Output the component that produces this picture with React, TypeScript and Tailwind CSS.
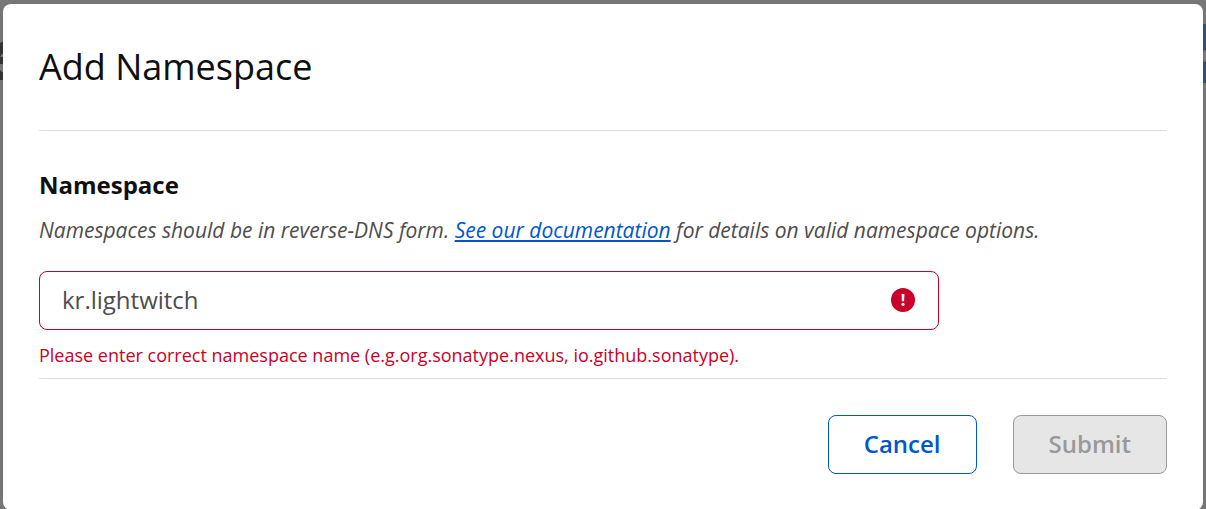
import { useState } from 'react';

// Slice of the page that stays visible on both sides of the dialog
function PageBehind() {
  return (
    <div className="absolute inset-x-0 top-6 flex items-start justify-between" aria-hidden="true">
      <svg className="mt-4 h-10 w-1" viewBox="0 0 4 40" fill="#333333">
        <path d="M0 3 L4 1 V14 Q2 12 0 17 Z" />
        <path d="M0 17 H4 V24 H0 Z" />
        <path d="M0 30 Q2 33 4 32 V40 L0 40 Z" />
      </svg>
      <div className="flex h-[59px] w-[3px] items-center justify-end overflow-hidden bg-[#344f78]">
        <div className="mt-1 h-3 w-[3px] shrink-0 rounded-l-full bg-[#75787a]" />
      </div>
    </div>
  );
}

function ErrorIcon() {
  return (
    <svg className="pointer-events-none absolute top-[17px] right-6 size-6" viewBox="0 0 24 24" aria-hidden="true">
      <circle cx="12" cy="12" r="12" fill="#ca0028" />
      <path d="M10.6 6.4 Q10.6 6 11 6 H13 Q13.4 6 13.4 6.4 L13.1 13.2 H10.9 Z" fill="#fff" />
      <circle cx="12" cy="16.3" r="1.6" fill="#fff" />
    </svg>
  );
}

export default function App() {
  const [namespace, setNamespace] = useState('kr.lightwitch');

  return (
    <div className="relative h-screen overflow-hidden bg-[#767676] px-[3px] pt-1 font-['Open_Sans',sans-serif]">
      <PageBehind />

      <form
        role="dialog"
        aria-labelledby="dialog-title"
        className="relative rounded-lg bg-white px-9"
        onSubmit={(e) => e.preventDefault()}
      >
        <header className="border-b border-[#d9dcee] pt-9 pb-9">
          <h1 id="dialog-title" className="text-[36px] leading-[54px] font-normal text-[#0f0f0f]">
            Add Namespace
          </h1>
        </header>

        <div className="pt-9 pb-2">
          <label htmlFor="namespace" className="block text-[24px] leading-9 font-bold text-[#0f0f0f]">
            Namespace
          </label>
          <p id="namespace-hint" className="mt-3 text-[21px] leading-[30px] text-[#4d4d4d] italic">
            Namespaces should be in reverse-DNS form.{' '}
            <a href="#documentation" className="text-[#0057c8] underline">
              See our documentation
            </a>{' '}
            for details on valid namespace options.
          </p>

          <div className="relative mt-[26px] max-w-[900px]">
            <input
              id="namespace"
              type="text"
              value={namespace}
              onChange={(e) => setNamespace(e.target.value)}
              aria-invalid="true"
              aria-describedby="namespace-hint namespace-error"
              className="block h-[59px] w-full rounded-lg border border-[#ca0028] bg-white pr-16 pb-0.5 pl-[22px] text-[24px] leading-9 text-[#4d4d4d] outline-none"
            />
            <ErrorIcon />
          </div>

          <p id="namespace-error" className="mt-3 text-[18px] leading-[26px] text-[#ca0028]">
            Please enter correct namespace name (e.g.org.sonatype.nexus, io.github.sonatype).
          </p>
        </div>

        <footer className="mt-0.5 flex justify-end gap-9 border-t border-[#d9dcee] py-9">
          <button
            type="button"
            className="h-[59px] rounded-lg border border-[#0057c8] bg-white px-[35px] pb-0.5 text-[24px] leading-9 font-semibold text-[#0057c8]"
          >
            Cancel
          </button>
          <button
            type="submit"
            disabled
            className="h-[59px] rounded-lg border border-[#999999] bg-[#e6e6e6] px-[35px] pb-0.5 text-[24px] leading-9 font-semibold text-[#999999]"
          >
            Submit
          </button>
        </footer>
      </form>
    </div>
  );
}
